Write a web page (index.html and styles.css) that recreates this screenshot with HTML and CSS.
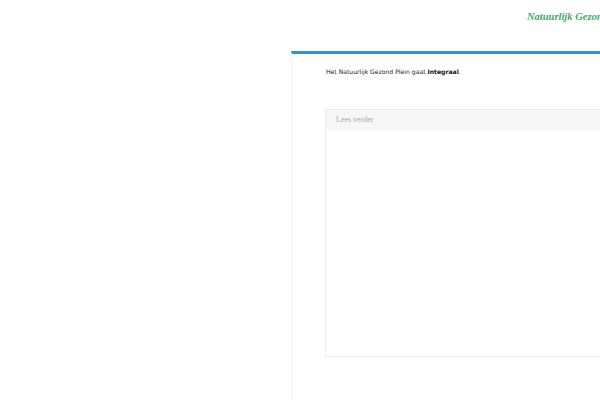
FILE: index.html
```html
<!DOCTYPE html>
<html>
<head>
<meta charset="utf-8">
<link rel="stylesheet" href="styles.css">
</head>
<body>
<header class="top">
  <div class="brand">Natuurlijk Gezond Plein</div>
</header>
<main class="panel">
  <p class="intro">Het Natuurlijk Gezond Plein gaat <strong>Integraal</strong>.</p>
  <section class="box">
    <div class="box-head">Lees verder</div>
    <div class="box-body"></div>
  </section>
</main>
</body>
</html>
```

FILE: styles.css
```css
html, body {
  margin: 0;
  padding: 0;
  background: #fff;
  width: 600px;
  height: 400px;
  overflow: hidden;
}
.top {
  height: 51px;
  position: relative;
  overflow: hidden;
}
.brand {
  position: absolute;
  left: 527px;
  top: 11px;
  white-space: nowrap;
  font-family: "Liberation Serif", serif;
  font-style: italic;
  font-weight: bold;
  font-size: 10.5px;
  color: #45a86a;
}
.panel {
  margin-left: 291px;
  width: 400px;
  height: 349px;
  border-top: 3px solid #3592d2;
  border-left: 1px solid #f3f3f3;
  box-sizing: border-box;
  padding: 0 0 0 33px;
}
.intro {
  margin: 14px 0 0 1px;
  font-family: "DejaVu Sans", sans-serif;
  font-size: 6.1px;
  color: #222;
}
.intro strong {
  font-weight: bold;
  color: #111;
}
.box {
  margin-top: 34px;
  height: 248px;
  border: 1px solid #ececec;
  box-sizing: border-box;
}
.box-head {
  height: 20px;
  background: #f6f6f6;
  line-height: 20px;
  padding-left: 10px;
  font-family: "Liberation Serif", serif;
  font-size: 8px;
  color: #aaa;
}
```
